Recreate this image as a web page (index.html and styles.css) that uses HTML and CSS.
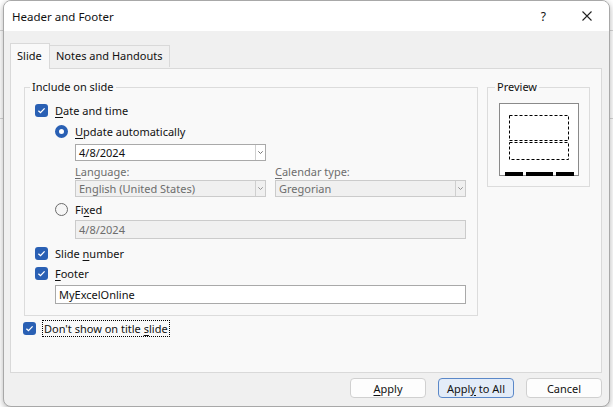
FILE: index.html
```html
<!DOCTYPE html>
<html lang="en">
<head>
    <meta charset="UTF-8">
    <title>Header and Footer</title>
    <link rel="stylesheet" href="styles.css">
</head>
<body>
    <div class="dialog">
        <div class="titlebar">
            <span class="title">Header and Footer</span>
            <span class="help">?</span>
            <svg class="close" width="10" height="10" viewBox="0 0 10 10">
                <path d="M0.5 0.5 L9.5 9.5 M9.5 0.5 L0.5 9.5" stroke="#222" stroke-width="1.1" fill="none"/>
            </svg>
        </div>
        <div class="body">
            <div class="tabs">
                <div class="tab active">Slide</div>
                <div class="tab">Notes and Handouts</div>
            </div>
            <div class="panel">
                <div class="groups">
                    <fieldset class="group include">
                        <legend>Include on slide</legend>
                        <div class="row">
                            <span class="cb"><svg width="13" height="13" viewBox="0 0 13 13"><path d="M3.4 6.7 L5.5 8.7 L9.6 4.4" stroke="#fff" stroke-width="1.3" fill="none"/></svg></span>
                            <span><u>D</u>ate and time</span>
                        </div>
                        <div class="row indent r-update">
                            <span class="radio on"></span>
                            <span><u>U</u>pdate automatically</span>
                        </div>
                        <div class="select date-select">
                            <span>4/8/2024</span>
                            <span class="arrow"><svg width="5" height="3" viewBox="0 0 5 3"><path d="M0.3 0.3 L2.5 2.5 L4.7 0.3" stroke="#666" stroke-width="0.9" fill="none"/></svg></span>
                        </div>
                        <div class="pair labels">
                            <span class="muted"><u>L</u>anguage:</span>
                            <span class="muted"><u>C</u>alendar type:</span>
                        </div>
                        <div class="pair selects">
                            <div class="select disabled">
                                <span>English (United States)</span>
                                <span class="arrow"><svg width="5" height="3" viewBox="0 0 5 3"><path d="M0.3 0.3 L2.5 2.5 L4.7 0.3" stroke="#888" stroke-width="0.9" fill="none"/></svg></span>
                            </div>
                            <div class="select disabled">
                                <span>Gregorian</span>
                                <span class="arrow"><svg width="5" height="3" viewBox="0 0 5 3"><path d="M0.3 0.3 L2.5 2.5 L4.7 0.3" stroke="#888" stroke-width="0.9" fill="none"/></svg></span>
                            </div>
                        </div>
                        <div class="row indent r-fixed">
                            <span class="radio"></span>
                            <span>Fi<u>x</u>ed</span>
                        </div>
                        <div class="field disabled fixed-field">4/8/2024</div>
                        <div class="row r-number">
                            <span class="cb"><svg width="13" height="13" viewBox="0 0 13 13"><path d="M3.4 6.7 L5.5 8.7 L9.6 4.4" stroke="#fff" stroke-width="1.3" fill="none"/></svg></span>
                            <span>Slide <u>n</u>umber</span>
                        </div>
                        <div class="row">
                            <span class="cb"><svg width="13" height="13" viewBox="0 0 13 13"><path d="M3.4 6.7 L5.5 8.7 L9.6 4.4" stroke="#fff" stroke-width="1.3" fill="none"/></svg></span>
                            <span><u>F</u>ooter</span>
                        </div>
                        <div class="field footer-field">MyExcelOnline</div>
                    </fieldset>
                    <fieldset class="group preview">
                        <legend>Preview</legend>
                        <svg class="slide" width="80" height="73" viewBox="0 0 80 73">
                            <rect x="0.5" y="0.5" width="79" height="72" fill="#fff" stroke="#8a8a8a"/>
                            <rect x="10.5" y="12.5" width="59" height="25" fill="none" stroke="#000" stroke-dasharray="3 2"/>
                            <rect x="10.5" y="39.5" width="59" height="17" fill="none" stroke="#000" stroke-dasharray="3 2"/>
                            <rect x="6" y="69" width="18" height="4" fill="#000"/>
                            <rect x="27" y="69" width="27" height="4" fill="#000"/>
                            <rect x="57" y="69" width="18" height="4" fill="#000"/>
                        </svg>
                    </fieldset>
                </div>
                <div class="row title-slide">
                    <span class="cb"><svg width="13" height="13" viewBox="0 0 13 13"><path d="M3.4 6.7 L5.5 8.7 L9.6 4.4" stroke="#fff" stroke-width="1.3" fill="none"/></svg></span>
                    <span class="focus">Don't show on title <u>s</u>lide</span>
                </div>
            </div>
            <div class="buttons">
                <button class="btn"><u>A</u>pply</button>
                <button class="btn default">Appl<u>y</u> to All</button>
                <button class="btn">Cancel</button>
            </div>
        </div>
    </div>
</body>
</html>
```

FILE: styles.css
```css
body {
    margin: 0;
    font-family: "Noto Sans", sans-serif;
    font-size: 11px;
    color: #111;
    background:
        linear-gradient(#d6d6d6, #d6d6d6) 0 30px / 100% 1px no-repeat,
        linear-gradient(#d6d6d6, #d6d6d6) 0 118px / 100% 1px no-repeat,
        linear-gradient(#9a9a9a, #9a9a9a) 75px 0 / 1px 100% no-repeat,
        #fff;
}
u {
    text-decoration-thickness: 1px;
    text-underline-offset: 2px;
}
.dialog {
    margin-left: 3px;
    width: 607px;
    height: 407px;
    box-sizing: border-box;
    border: 1px solid #a8a8a8;
    border-radius: 8px;
    overflow: hidden;
    background: #f0f0f0;
    box-shadow: 0 2px 6px rgba(0, 0, 0, 0.3);
}
.titlebar {
    height: 30px;
    background: #fff;
    display: flex;
    align-items: center;
    padding-left: 8px;
}
.title {
    flex: 1;
    font-size: 11.5px;
}
.help {
    font-size: 12px;
    margin-right: 36px;
}
.close {
    margin-right: 17px;
}
.body {
    padding: 12px 7px 0 6px;
}
.tabs {
    display: flex;
    align-items: flex-end;
    height: 25px;
}
.tab {
    height: 22px;
    box-sizing: border-box;
    padding: 0 6px;
    line-height: 20px;
    border: 1px solid #d9d9d9;
    border-bottom: none;
    border-left: none;
    background: #f0f0f0;
    margin-bottom: 1px;
}
.tab.active {
    height: 26px;
    width: 40px;
    border-left: 1px solid #d9d9d9;
    background: #f9f9f9;
    line-height: 23px;
    padding-bottom: 2px;
    margin-bottom: -1px;
    position: relative;
}
.panel {
    height: 305px;
    box-sizing: border-box;
    border: 1px solid #d9d9d9;
    background: #f9f9f9;
    padding: 11px 0 0 13px;
}
.groups {
    display: flex;
    align-items: flex-start;
    gap: 9px;
}
.group {
    margin: 0;
    border: 1px solid #dcdcdc;
    box-sizing: border-box;
}
.group legend {
    line-height: 14px;
    padding: 0 2px;
}
.include {
    width: 454px;
    padding: 6px 10px 11px 10px;
}
.include legend {
    margin-left: -5px;
}
.preview {
    width: 103px;
    padding: 9px 10px 10px 11px;
}
.preview legend {
    margin-left: -4px;
}
.slide {
    display: block;
}
.row {
    display: flex;
    align-items: center;
    gap: 7px;
    height: 20px;
}
.indent {
    margin-left: 20px;
}
.r-update {
    margin-top: 1px;
}
.r-fixed {
    margin-top: 2px;
}
.r-number {
    margin-top: 4px;
}
.cb {
    width: 13px;
    height: 13px;
    border-radius: 3px;
    background: #2a60b4;
    display: flex;
}
.radio {
    width: 11px;
    height: 11px;
    border-radius: 50%;
    border: 1px solid #6b6b6b;
    background: #f6f6f6;
}
.radio.on {
    width: 5px;
    height: 5px;
    border: 4px solid #2a60b4;
    background: #fff;
}
.select {
    width: 191px;
    height: 17px;
    box-sizing: border-box;
    border: 1px solid #a9a9a9;
    background: #fff;
    display: flex;
    align-items: center;
    padding-left: 3px;
}
.select span:first-child {
    flex: 1;
}
.select .arrow {
    width: 9px;
    height: 15px;
    border-left: 1px solid #cfcfcf;
    display: flex;
    align-items: center;
    justify-content: center;
}
.date-select {
    margin: 3px 0 0 40px;
}
.pair {
    display: flex;
    gap: 9px;
    margin-left: 40px;
}
.pair > * {
    width: 191px;
}
.labels {
    margin-top: 3px;
    height: 15px;
    align-items: center;
}
.selects {
    margin-top: 1px;
}
.muted {
    color: #6d6d6d;
}
.disabled {
    background: #f0f0f0;
    border-color: #cbcbcb;
    color: #6d6d6d;
}
.field {
    height: 19px;
    box-sizing: border-box;
    border: 1px solid #a9a9a9;
    background: #fff;
    line-height: 17px;
    padding-left: 3px;
}
.field.disabled {
    background: #f0f0f0;
    border-color: #cbcbcb;
}
.fixed-field {
    width: 391px;
    margin: 1px 0 0 40px;
}
.footer-field {
    width: 411px;
    margin: 2px 0 0 20px;
}
.title-slide {
    margin: 4px 0 0 -1px;
    height: 17px;
    gap: 6px;
}
.focus {
    border: 1px dotted #000;
    padding: 0 1px;
    line-height: 15px;
}
.buttons {
    display: flex;
    justify-content: flex-end;
    gap: 12px;
    margin-top: 5px;
}
.btn {
    width: 76px;
    height: 20px;
    border: 1px solid #d0d0d0;
    border-radius: 4px;
    background: #fdfdfd;
    font-family: "Noto Sans", sans-serif;
    font-size: 11px;
    color: #111;
    padding: 0;
}
.btn.default {
    background: #e3ecf8;
    border-color: #5b88c8;
}
```
